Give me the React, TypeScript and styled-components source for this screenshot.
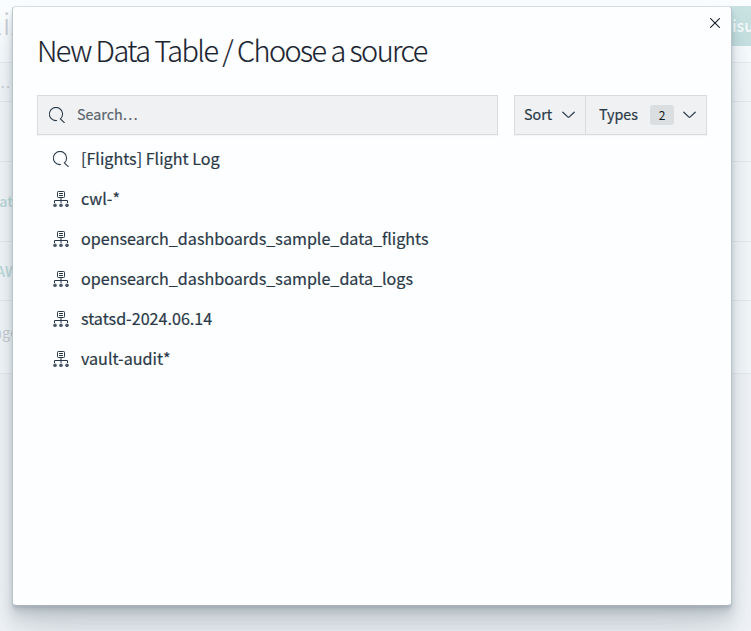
import React from 'react';
import styled, { createGlobalStyle } from 'styled-components';

const Global = createGlobalStyle`
  * { box-sizing: border-box; }
  body { margin: 0; overflow: hidden; background: #f0f4f8; }
  button, input { font: inherit; color: inherit; }
`;

const Page = styled.div`
  position: relative;
  width: 751px;
  height: 631px;
  overflow: hidden;
  background: #f3f6f9;
  color: #2a3947;
  font-family: 'Noto Sans CJK SC', 'Noto Sans', sans-serif;
`;

const Backdrop = styled.div`
  display: flex;
  flex-direction: column;
`;

const BackRow = styled.div<{ $h: number; $bg?: string }>`
  display: flex;
  align-items: center;
  justify-content: space-between;
  height: ${p => p.$h}px;
  background: ${p => p.$bg ?? '#f6fafc'};
  border-bottom: 1px solid #e9edf1;
`;

const BackText = styled.span<{ $size: number; $color: string; $weight?: number; $shift?: number; $end?: number }>`
  display: flex;
  justify-content: flex-end;
  width: ${p => p.$end ?? 13}px;
  white-space: nowrap;
  font-size: ${p => p.$size}px;
  font-weight: ${p => p.$weight ?? 400};
  color: ${p => p.$color};
  margin-top: ${p => p.$shift ?? 0}px;
`;

const BackButton = styled.div`
  display: flex;
  align-items: center;
  align-self: flex-start;
  width: 30px;
  height: 40px;
  margin-top: 6px;
  padding: 0 0 2px 11px;
  background: #c8e2e2;
  color: #f9fcfc;
  font-size: 16px;
  font-weight: 500;
`;

const Modal = styled.section`
  position: absolute;
  left: 12px;
  top: 6px;
  width: 720px;
  height: 600px;
  border: 1px solid #d9dde1;
  border-color: #d9dde1 #bcc6cd #a9b4bd #bcc6cd;
  border-radius: 4px;
  background: #fdfeff;
  box-shadow:
    0 40px 64px rgba(65, 88, 101, 0.08),
    0 24px 32px rgba(65, 88, 101, 0.1),
    0 16px 16px rgba(65, 88, 101, 0.1),
    0 8px 8px rgba(65, 88, 101, 0.1),
    0 4px 4px rgba(65, 88, 101, 0.1),
    0 2px 2px rgba(65, 88, 101, 0.1);
`;

const CloseButton = styled.button`
  position: absolute;
  top: 4px;
  right: 4px;
  display: grid;
  place-items: center;
  width: 24px;
  height: 24px;
  padding: 0;
  border: 0;
  background: none;
`;

const Header = styled.header`
  padding: 23px 24px 0;
  height: 88px;
`;

const Title = styled.h1`
  margin: 0;
  font-size: 28.8px;
  font-weight: 300;
  line-height: 40px;
  letter-spacing: -1.51px;
  white-space: nowrap;
  color: #1a2430;
  -webkit-text-stroke: 0.15px currentColor;
`;

const Toolbar = styled.div`
  display: flex;
  gap: 16px;
  padding: 0 24px;
`;

const SearchBox = styled.label`
  display: flex;
  align-items: center;
  gap: 12px;
  width: 461px;
  height: 40px;
  padding-left: 11px;
  border: 1px solid #d8dcdf;
  background: #f0f1f3;
  box-shadow: 0 1px 1px rgba(65, 78, 101, 0.06);
`;

const SearchInput = styled.input`
  flex: 1;
  min-width: 0;
  padding: 0 0 3px;
  border: 0;
  outline: 0;
  background: none;
  font-size: 14.3px;
  line-height: 20px;
  -webkit-text-stroke: 0.2px #5a646c;
  &::placeholder { color: #5a646c; opacity: 1; }
`;

const Filters = styled.div`
  display: flex;
  width: 193px;
  height: 40px;
  border: 1px solid #d8dcdf;
  background: #f0f1f3;
  box-shadow: 0 1px 1px rgba(65, 78, 101, 0.06);
`;

const Filter = styled.button<{ $w: number; $pad: number }>`
  display: flex;
  align-items: center;
  width: ${p => p.$w}px;
  padding: 0 10px 0 ${p => p.$pad}px;
  border: 0;
  background: none;
  font-size: 14.3px;
  white-space: nowrap;
  & + & { border-left: 1px solid #d8dcdf; }
  svg { margin-left: auto; }
`;

const FilterName = styled.span`
  line-height: 20px;
  padding-bottom: 2px;
  -webkit-text-stroke: 0.2px currentColor;
`;

const Badge = styled.span`
  display: grid;
  place-items: center;
  width: 24px;
  height: 20px;
  margin-left: 12px;
  border-radius: 3px;
  background: #dbdee1;
  color: #10181f;
  font-size: 12px;
  line-height: 20px;
`;

const List = styled.ul`
  margin: 0;
  padding: 4px 40px 0;
  list-style: none;
`;

const Item = styled.li`
  display: flex;
  align-items: center;
  gap: 12px;
  height: 40px;
  font-size: 16.13px;
  line-height: 24px;
  white-space: nowrap;
`;

const Label = styled.span`
  padding-bottom: 2px;
  -webkit-text-stroke: 0.2px currentColor;
`;

const SearchIcon = () => (
  <svg width="16" height="16" viewBox="0 0 16 16" fill="none" stroke="#2a3947" strokeWidth="1.05" strokeLinecap="round">
    <path d="M7.6 13.6A6.6 6.6 0 1 1 11.4 11.9L15.3 15.6" />
  </svg>
);

const PatternIcon = () => (
  <svg width="16" height="16" viewBox="0 0 16 16" fill="none" stroke="#2a3947">
    <rect x="4.5" y="0.5" width="7" height="6" rx="0.8" strokeWidth="1" />
    <path d="M6 2.5h4M6 4.5h4M8 7v5M1.5 12V9.5h13V12" strokeWidth="1" />
    <g fill="#4b5867" stroke="none">
      <circle cx="2" cy="14.3" r="1.75" />
      <circle cx="8" cy="14.3" r="1.75" />
      <circle cx="14" cy="14.3" r="1.75" />
    </g>
  </svg>
);

const Chevron = () => (
  <svg width="13" height="8" viewBox="0 0 13 8" fill="none" stroke="#2a3947" strokeWidth="1.2" strokeLinecap="round" strokeLinejoin="round">
    <path d="M.8 1.2 6 6.1q.5.4 1 0l5.2-4.9" />
  </svg>
);

const sources = [
  { name: '[Flights] Flight Log', saved: true },
  { name: 'cwl-*' },
  { name: 'opensearch_dashboards_sample_data_flights' },
  { name: 'opensearch_dashboards_sample_data_logs' },
  { name: 'statsd-2024.06.14' },
  { name: 'vault-audit*' },
];

export default function App() {
  return (
    <Page>
      <Global />
      <Backdrop aria-hidden>
        <BackRow $h={63} $bg="#fafdff">
          <BackText $size={30} $weight={300} $color="#c9ced2" $shift={-18} $end={24}>Visualiz</BackText>
          <BackButton>isu</BackButton>
        </BackRow>
        <BackRow $h={39}><BackText $size={14.5} $color="#cbd0d4" $shift={-2} $end={10}>Search…</BackText></BackRow>
        <BackRow $h={60} />
        <BackRow $h={80}><BackText $size={14.5} $weight={500} $color="#c1dcdc" $shift={-2}>Dat</BackText></BackRow>
        <BackRow $h={59}><BackText $size={14.5} $weight={500} $color="#c1dcdc" $shift={-2} $end={18}>AW</BackText></BackRow>
        <BackRow $h={73}><BackText $size={14.5} $color="#cbd0d4" $shift={-11} $end={18}>nge</BackText></BackRow>
      </Backdrop>
      <Modal role="dialog" aria-label="New Data Table / Choose a source">
        <CloseButton aria-label="Close">
          <svg width="10" height="10" viewBox="0 0 10 10" stroke="#1a2430" strokeWidth="1.15" strokeLinecap="round">
            <path d="M.6.6 9.4 9.4M9.4.6.6 9.4" />
          </svg>
        </CloseButton>
        <Header><Title>New Data Table / Choose a source</Title></Header>
        <Toolbar>
          <SearchBox>
            <SearchIcon />
            <SearchInput placeholder="Search…" />
          </SearchBox>
          <Filters>
            <Filter $w={70} $pad={9}><FilterName>Sort</FilterName><Chevron /></Filter>
            <Filter $w={121} $pad={13}><FilterName>Types</FilterName><Badge>2</Badge><Chevron /></Filter>
          </Filters>
        </Toolbar>
        <List>
          {sources.map(s => (
            <Item key={s.name}>
              {s.saved ? <SearchIcon /> : <PatternIcon />}
              <Label>{s.name}</Label>
            </Item>
          ))}
        </List>
      </Modal>
    </Page>
  );
}
